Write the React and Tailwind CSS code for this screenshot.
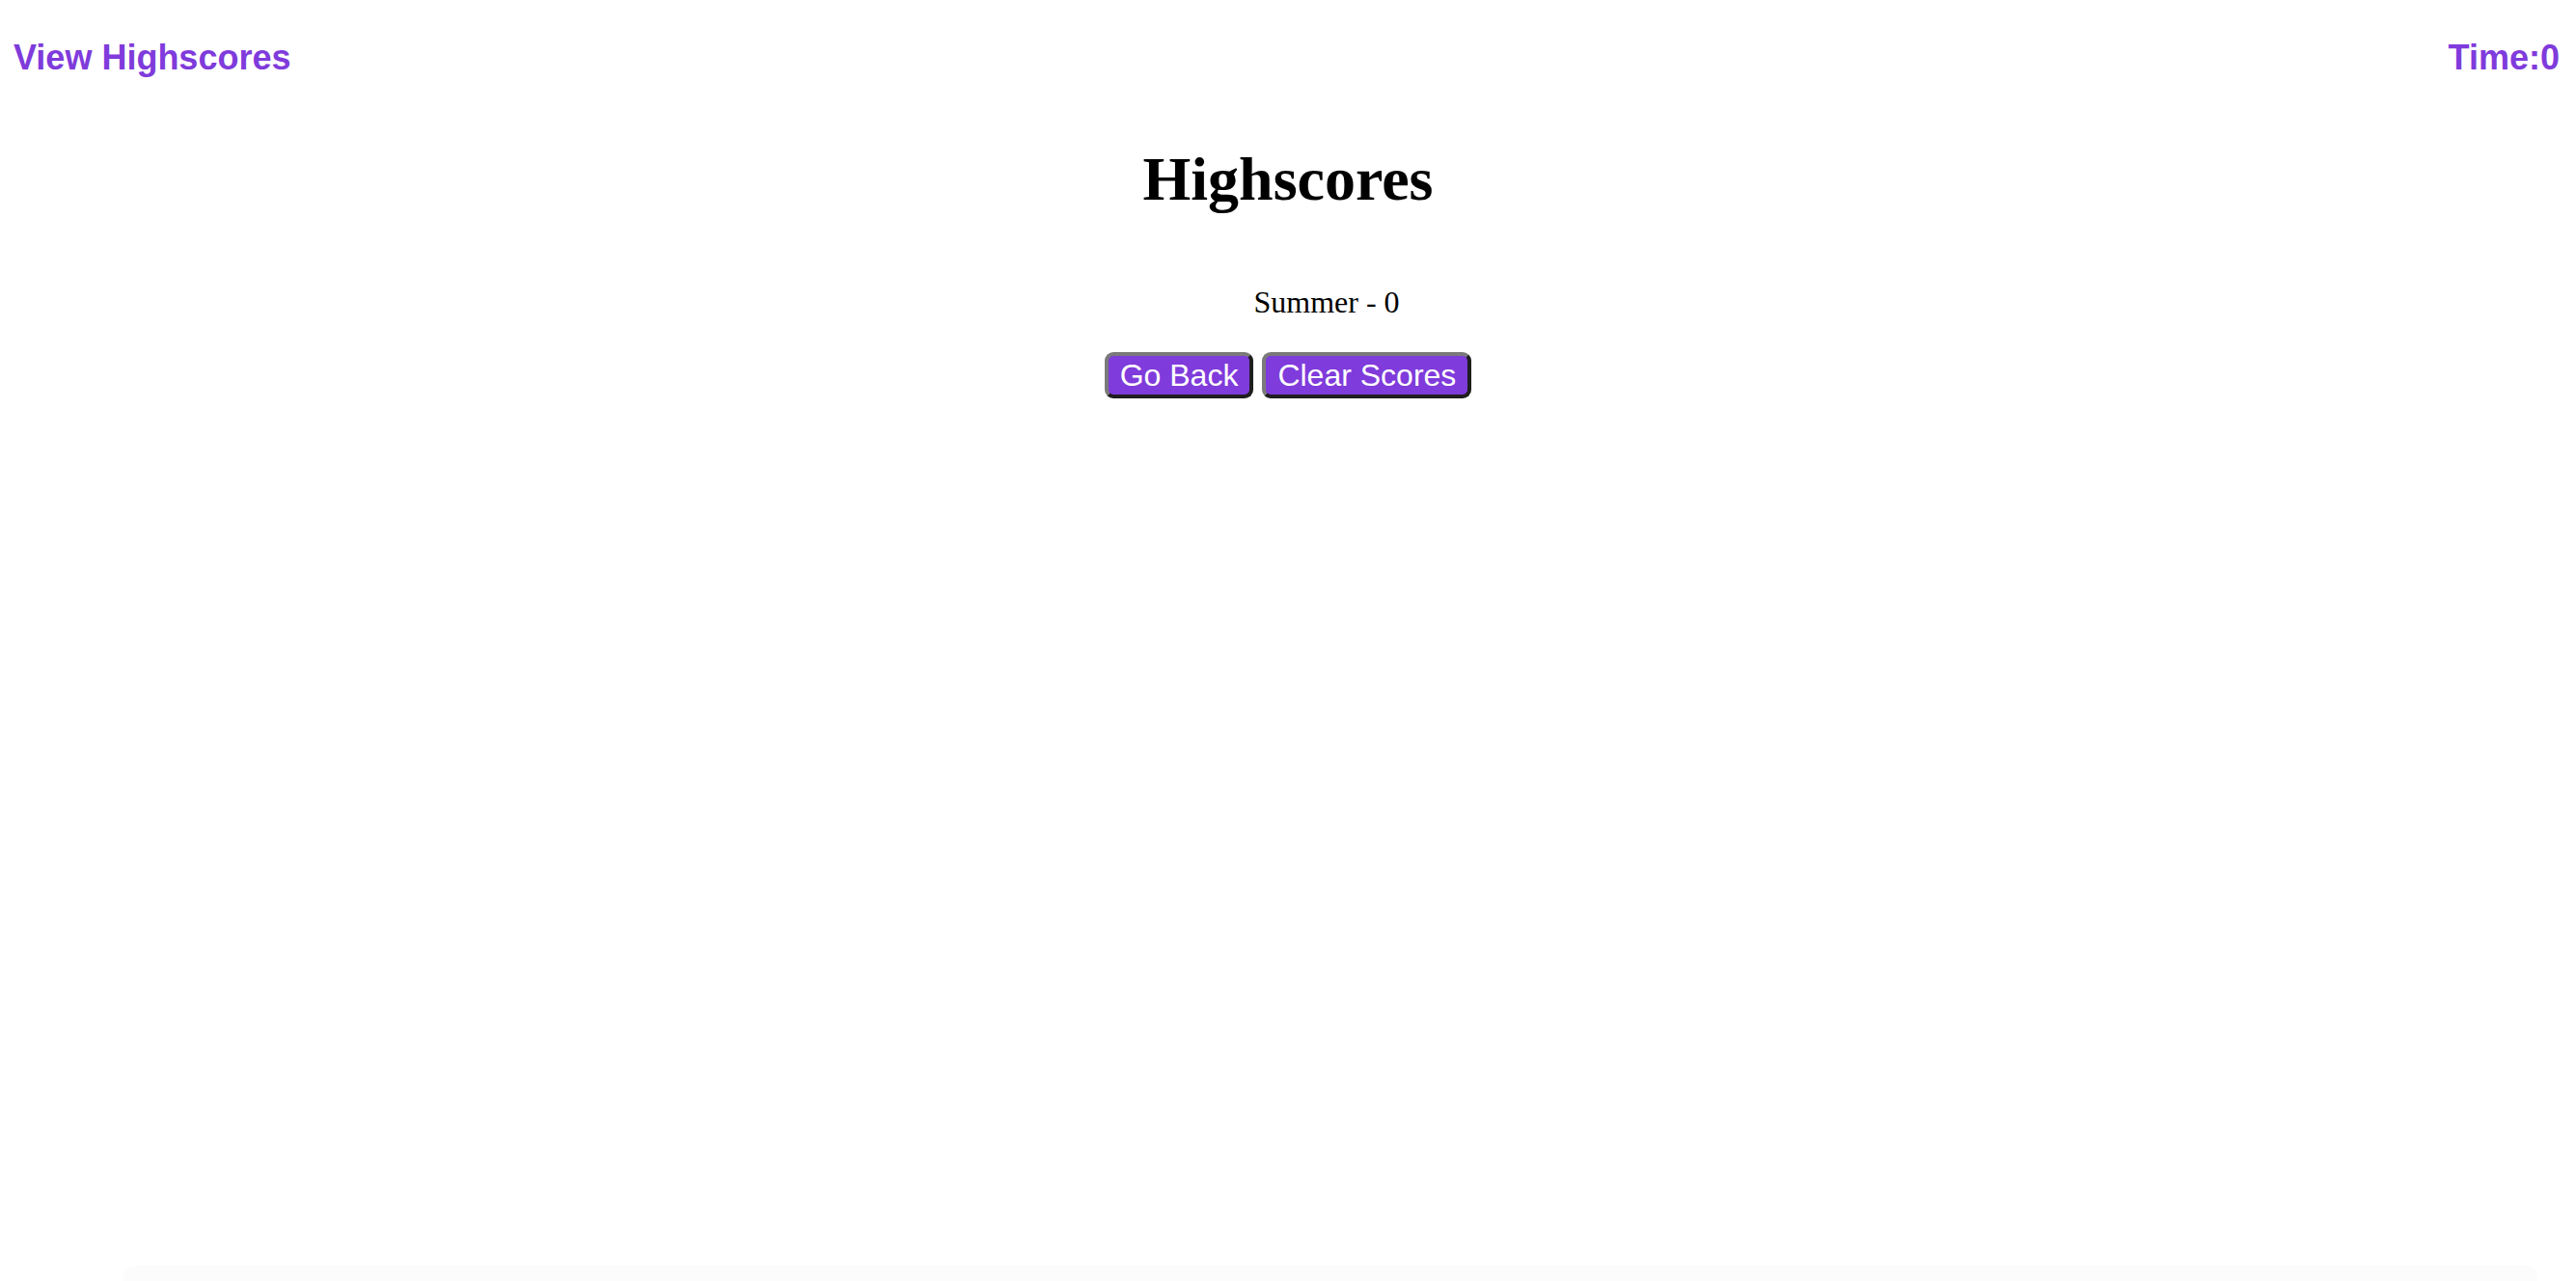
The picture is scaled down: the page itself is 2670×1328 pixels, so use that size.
import React from "react";

export default function App() {
  const sans = { fontFamily: '"Liberation Sans", Arial, sans-serif' };
  const serif = { fontFamily: '"Liberation Serif", "Times New Roman", serif' };
  return (
    <div className="min-h-screen flex flex-col bg-white">
      <header
        className="flex justify-between items-start pt-[40px] pl-[14px] pr-[17px] text-[36px] leading-[40px] font-bold text-[#7f3bdb]"
        style={sans}
      >
        <a href="#" className="block">View Highscores</a>
        <span className="block">Time:0</span>
      </header>
      <main className="text-center text-black" style={serif}>
        <h1 className="mt-[70px] text-[64px] leading-[72px] font-bold">Highscores</h1>
        <ul className="mt-[73px] pl-[80px] list-none text-[32px] leading-[36px]">
          <li>Summer - 0</li>
        </ul>
        <div className="mt-[34px] flex justify-center gap-[9px]">
          <button
            className="rounded-[9px] border-[4px] border-t-[#7a7a7a] border-l-[#7a7a7a] border-b-[#1e1e1e] border-r-[#1e1e1e] bg-[#7f3bdb] px-[12px] py-[2px] text-[32px] leading-[36px] text-white"
            style={sans}
          >
            Go Back
          </button>
          <button
            className="rounded-[9px] border-[4px] border-t-[#7a7a7a] border-l-[#7a7a7a] border-b-[#1e1e1e] border-r-[#1e1e1e] bg-[#7f3bdb] px-[12px] py-[2px] text-[32px] leading-[36px] text-white"
            style={sans}
          >
            Clear Scores
          </button>
        </div>
      </main>
      <div className="mt-auto ml-[128px] mr-[40px] h-[16px] rounded-t-[12px] bg-[#fcfcfc]" />
    </div>
  );
}
